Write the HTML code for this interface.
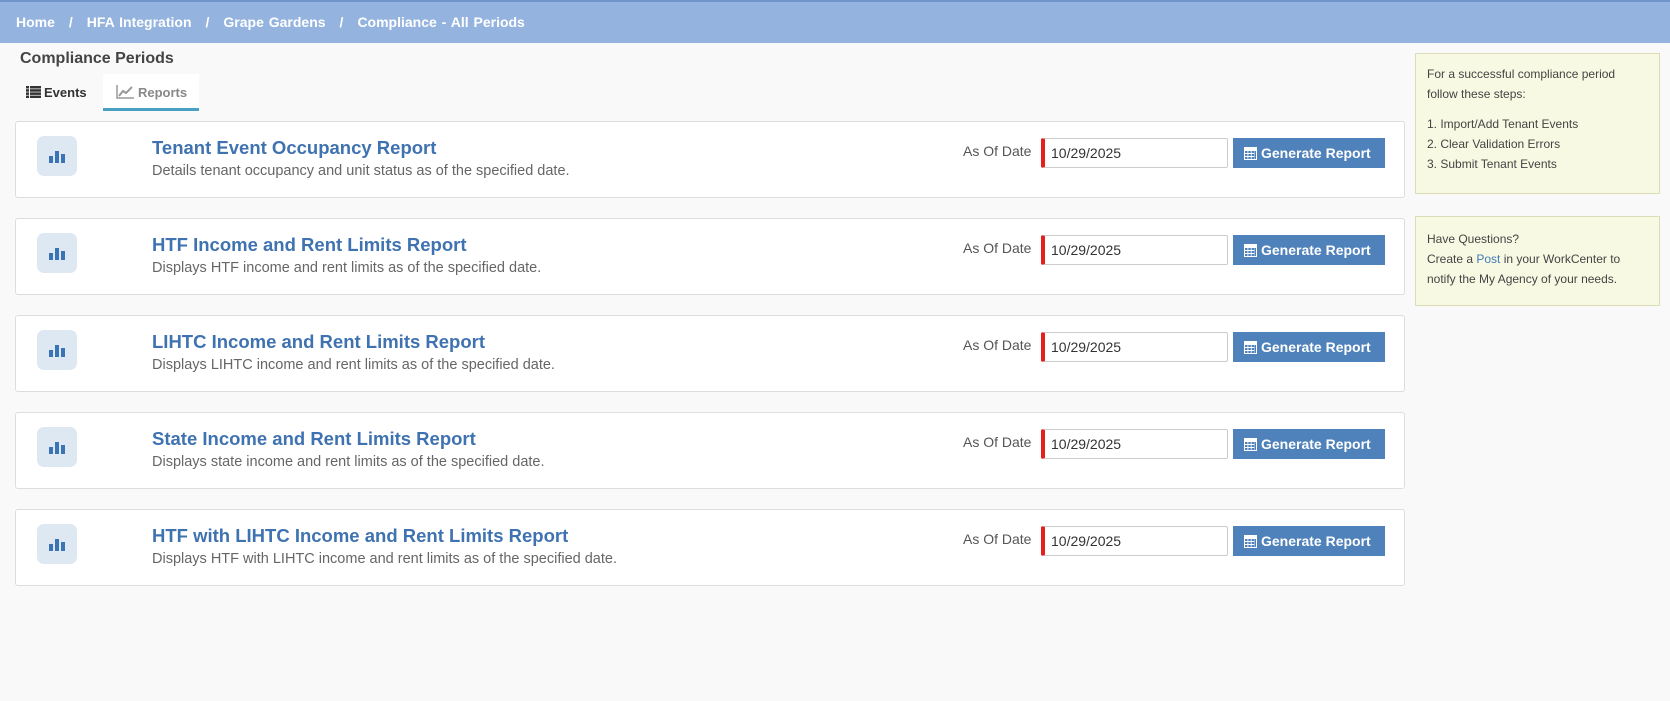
<!DOCTYPE html>
<html><head><meta charset="utf-8"><style>
*{box-sizing:border-box;margin:0;padding:0}
body{width:1670px;height:701px;background:#f9f9f9;font-family:"Liberation Sans",Arial,sans-serif;color:#555;position:relative;overflow:hidden}
.hdr{position:absolute;left:0;top:0;width:1670px;height:43px;background:#94b4df;border-top:2px solid #6f95cc;color:#fff;font-weight:bold;font-size:14px;line-height:41px;padding-left:16px;word-spacing:1px}
.hdr span{margin:0 14px}
.title{position:absolute;left:20px;top:50px;font-size:16px;font-weight:bold;color:#444}
.tab{position:absolute;top:74px;height:37px;font-size:13px;line-height:37px}
.t1{left:26px;color:#333;font-weight:bold}
.t2{left:103px;width:96px;background:#fff;border-bottom:3px solid #4a9fc4;color:#888;padding-left:13px;font-weight:bold}
.card{position:absolute;left:15px;width:1390px;height:77px;background:#fff;border:1px solid #ddd;border-radius:3px}
.ic{position:absolute;left:21px;top:14px;width:40px;height:40px;background:#dde8f3;border-radius:7px}
.ic i{position:absolute;bottom:13px;width:4px;background:#3a74b5}
.ct{position:absolute;left:136px;top:15px;font-size:18.5px;font-weight:bold;color:#3f72b0}
.cd{position:absolute;left:136px;top:41px;font-size:14.5px;color:#666}
.ad{position:absolute;left:947px;top:21px;font-size:14px;color:#555}
.in{position:absolute;left:1025px;top:16px;width:187px;height:30px;border:1px solid #ccc;border-left:4px solid #e3201b;border-radius:2px;font-size:14px;line-height:28px;padding-left:6px;color:#333}
.bt{position:absolute;left:1217px;top:16px;width:152px;height:30px;background:#4f82ba;color:#fff;font-weight:bold;font-size:14px;line-height:30px;padding-left:28px}
.bt svg{position:absolute;left:11px;top:8px}
.side{position:absolute;left:1415px;width:245px;background:#f8f9e3;border:1px solid #dcdcb6;font-size:12px;color:#444;padding:10px 11px;line-height:20px}
.side a{color:#3f7ab8}
</style></head><body>
<div class="hdr">Home<span>/</span>HFA Integration<span>/</span>Grape Gardens<span>/</span>Compliance - All Periods</div>
<div class="title">Compliance Periods</div>
<div class="tab t1"><svg width="15" height="12" viewBox="0 0 15 12" style="vertical-align:-1px;margin-right:3px"><g fill="#333"><rect x="0" y="0" width="3" height="2.5"/><rect x="4" y="0" width="11" height="2.5"/><rect x="0" y="3.2" width="3" height="2.5"/><rect x="4" y="3.2" width="11" height="2.5"/><rect x="0" y="6.4" width="3" height="2.5"/><rect x="4" y="6.4" width="11" height="2.5"/><rect x="0" y="9.6" width="3" height="2.4"/><rect x="4" y="9.6" width="11" height="2.4"/></g></svg>Events</div>
<div class="tab t2"><svg width="18" height="14" viewBox="0 0 18 14" style="vertical-align:-2px;margin-right:4px"><path d="M1 0V13H18" stroke="#999" stroke-width="1.5" fill="none"/><path d="M3 11L7 6L10 8L16 2" stroke="#999" stroke-width="2" fill="none"/></svg>Reports</div>

<div class="side" style="top:53px;height:141px">For a successful compliance period follow these steps:<div style="height:10px"></div>1. Import/Add Tenant Events<br>2. Clear Validation Errors<br>3. Submit Tenant Events</div>
<div class="side" style="top:216px;height:90px;padding-top:12px">Have Questions?<br>Create a <a>Post</a> in your WorkCenter to notify the My Agency of your needs.</div>

<div class="card" style="top:121px"><div class="ic"><i style="left:12px;height:7px"></i><i style="left:18px;height:12px"></i><i style="left:24px;height:9px"></i></div><div class="ct">Tenant Event Occupancy Report</div><div class="cd">Details tenant occupancy and unit status as of the specified date.</div><div class="ad">As Of Date</div><div class="in">10/29/2025</div><div class="bt"><svg width="13" height="14" viewBox="0 0 13 14"><rect x="0" y="1" width="13" height="13" fill="#fff"/><g fill="#4f82ba"><rect x="1" y="5" width="2.5" height="2"/><rect x="4.3" y="5" width="2.5" height="2"/><rect x="7.6" y="5" width="2.5" height="2"/><rect x="1" y="8" width="2.5" height="2"/><rect x="4.3" y="8" width="2.5" height="2"/><rect x="7.6" y="8" width="2.5" height="2"/><rect x="1" y="11" width="2.5" height="2"/><rect x="4.3" y="11" width="2.5" height="2"/><rect x="7.6" y="11" width="2.5" height="2"/><rect x="10.5" y="5" width="1.5" height="8"/></g></svg>Generate Report</div></div>

<div class="card" style="top:218px"><div class="ic"><i style="left:12px;height:7px"></i><i style="left:18px;height:12px"></i><i style="left:24px;height:9px"></i></div><div class="ct">HTF Income and Rent Limits Report</div><div class="cd">Displays HTF income and rent limits as of the specified date.</div><div class="ad">As Of Date</div><div class="in">10/29/2025</div><div class="bt"><svg width="13" height="14" viewBox="0 0 13 14"><rect x="0" y="1" width="13" height="13" fill="#fff"/><g fill="#4f82ba"><rect x="1" y="5" width="2.5" height="2"/><rect x="4.3" y="5" width="2.5" height="2"/><rect x="7.6" y="5" width="2.5" height="2"/><rect x="1" y="8" width="2.5" height="2"/><rect x="4.3" y="8" width="2.5" height="2"/><rect x="7.6" y="8" width="2.5" height="2"/><rect x="1" y="11" width="2.5" height="2"/><rect x="4.3" y="11" width="2.5" height="2"/><rect x="7.6" y="11" width="2.5" height="2"/><rect x="10.5" y="5" width="1.5" height="8"/></g></svg>Generate Report</div></div>

<div class="card" style="top:315px"><div class="ic"><i style="left:12px;height:7px"></i><i style="left:18px;height:12px"></i><i style="left:24px;height:9px"></i></div><div class="ct">LIHTC Income and Rent Limits Report</div><div class="cd">Displays LIHTC income and rent limits as of the specified date.</div><div class="ad">As Of Date</div><div class="in">10/29/2025</div><div class="bt"><svg width="13" height="14" viewBox="0 0 13 14"><rect x="0" y="1" width="13" height="13" fill="#fff"/><g fill="#4f82ba"><rect x="1" y="5" width="2.5" height="2"/><rect x="4.3" y="5" width="2.5" height="2"/><rect x="7.6" y="5" width="2.5" height="2"/><rect x="1" y="8" width="2.5" height="2"/><rect x="4.3" y="8" width="2.5" height="2"/><rect x="7.6" y="8" width="2.5" height="2"/><rect x="1" y="11" width="2.5" height="2"/><rect x="4.3" y="11" width="2.5" height="2"/><rect x="7.6" y="11" width="2.5" height="2"/><rect x="10.5" y="5" width="1.5" height="8"/></g></svg>Generate Report</div></div>

<div class="card" style="top:412px"><div class="ic"><i style="left:12px;height:7px"></i><i style="left:18px;height:12px"></i><i style="left:24px;height:9px"></i></div><div class="ct">State Income and Rent Limits Report</div><div class="cd">Displays state income and rent limits as of the specified date.</div><div class="ad">As Of Date</div><div class="in">10/29/2025</div><div class="bt"><svg width="13" height="14" viewBox="0 0 13 14"><rect x="0" y="1" width="13" height="13" fill="#fff"/><g fill="#4f82ba"><rect x="1" y="5" width="2.5" height="2"/><rect x="4.3" y="5" width="2.5" height="2"/><rect x="7.6" y="5" width="2.5" height="2"/><rect x="1" y="8" width="2.5" height="2"/><rect x="4.3" y="8" width="2.5" height="2"/><rect x="7.6" y="8" width="2.5" height="2"/><rect x="1" y="11" width="2.5" height="2"/><rect x="4.3" y="11" width="2.5" height="2"/><rect x="7.6" y="11" width="2.5" height="2"/><rect x="10.5" y="5" width="1.5" height="8"/></g></svg>Generate Report</div></div>

<div class="card" style="top:509px"><div class="ic"><i style="left:12px;height:7px"></i><i style="left:18px;height:12px"></i><i style="left:24px;height:9px"></i></div><div class="ct">HTF with LIHTC Income and Rent Limits Report</div><div class="cd">Displays HTF with LIHTC income and rent limits as of the specified date.</div><div class="ad">As Of Date</div><div class="in">10/29/2025</div><div class="bt"><svg width="13" height="14" viewBox="0 0 13 14"><rect x="0" y="1" width="13" height="13" fill="#fff"/><g fill="#4f82ba"><rect x="1" y="5" width="2.5" height="2"/><rect x="4.3" y="5" width="2.5" height="2"/><rect x="7.6" y="5" width="2.5" height="2"/><rect x="1" y="8" width="2.5" height="2"/><rect x="4.3" y="8" width="2.5" height="2"/><rect x="7.6" y="8" width="2.5" height="2"/><rect x="1" y="11" width="2.5" height="2"/><rect x="4.3" y="11" width="2.5" height="2"/><rect x="7.6" y="11" width="2.5" height="2"/><rect x="10.5" y="5" width="1.5" height="8"/></g></svg>Generate Report</div></div>
</body></html>
